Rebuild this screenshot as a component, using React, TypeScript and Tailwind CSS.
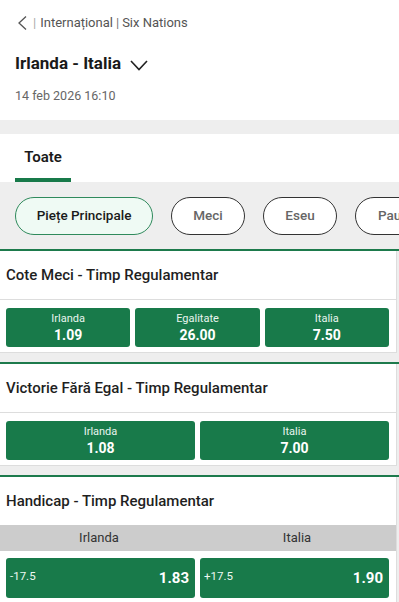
import React from "react";

const G = "bg-[#187a4a]";

function OddBtn({ label, value }: { label: string; value: string }) {
  return (
    <div className={`flex-1 h-[39px] rounded-[3px] ${G} flex flex-col items-center justify-center text-white leading-none`}>
      <span className="text-[11px] text-[#e8f5ee]">{label}</span>
      <span className="text-[14px] font-bold mt-[4px]">{value}</span>
    </div>
  );
}

function HcpBtn({ line, value }: { line: string; value: string }) {
  return (
    <div className={`flex-1 h-[40px] rounded-[3px] ${G} flex items-center justify-between pl-[4px] pr-[6px] text-white leading-none`}>
      <span className="text-[11.5px] text-[#eef8f2] -mt-[3px]">{line}</span>
      <span className="text-[15px] font-bold">{value}</span>
    </div>
  );
}

function Section({ title, children, last }: { title: string; children: React.ReactNode; last?: boolean }) {
  return (
    <div className={`border-t-2 border-[#1d7a4c] ${last ? "" : "mb-[9px]"}`}>
      <div className="bg-white w-[397px] border-r border-[#dddddd]">
        <div className="h-[48px] flex items-center pl-[6px] text-[15px] font-medium text-[#1f1f1f]">{title}</div>
        {children}
      </div>
    </div>
  );
}

export default function App() {
  return (
    <div className="w-[399px] h-[602px] overflow-hidden bg-[#eeeeee] font-['Roboto',sans-serif]">
      <div className="bg-white h-[120px] pl-[15px] pt-[14px]">
        <div className="flex items-center h-[18px] text-[13px] text-[#555555]">
          <svg width="12" height="16" viewBox="0 0 12 16" className="ml-[1px]">
            <path d="M10 1.5 L3 8 L10 14.5" fill="none" stroke="#555" strokeWidth="1.3" />
          </svg>
          <span className="ml-[5px] text-[#aaaaaa]">|</span>
          <span className="ml-[4px]">Internațional</span>
          <span className="ml-[3px] text-[#777]">|</span>
          <span className="ml-[3px]">Six Nations</span>
        </div>
        <div className="flex items-center mt-[21px] h-[22px]">
          <span className="text-[17px] font-bold text-[#1a1a1a]">Irlanda - Italia</span>
          <svg width="18" height="11" viewBox="0 0 18 11" className="ml-[9px] mt-[3px]">
            <path d="M1 1 L9 9.5 L17 1" fill="none" stroke="#222" strokeWidth="1.6" />
          </svg>
        </div>
        <div className="mt-[12px] text-[12.5px] text-[#666666]">14 feb 2026 16:10</div>
      </div>
      <div className="h-[14px]" />
      <div className="bg-white h-[48px] pl-[15px] flex items-end">
        <div className="w-[56px] flex flex-col items-center">
          <span className="text-[15px] font-semibold text-[#1a1a1a] leading-none">Toate</span>
          <div className={`w-full h-[4px] ${G} mt-[13px]`} />
        </div>
      </div>
      <div className="h-[67px] flex items-center gap-[18px] pl-[15px] overflow-hidden whitespace-nowrap">
        <div className="h-[38px] w-[138px] shrink-0 rounded-full border border-[#2f8a5c] bg-[#effaf4] flex items-center justify-center text-[13.5px] font-medium text-[#1a1a1a]">Piețe Principale</div>
        <div className="h-[38px] w-[74px] shrink-0 rounded-full border border-[#333] bg-white flex items-center justify-center text-[13.5px] font-medium text-[#666]">Meci</div>
        <div className="h-[38px] w-[74px] shrink-0 rounded-full border border-[#333] bg-white flex items-center justify-center text-[13.5px] font-medium text-[#666]">Eseu</div>
        <div className="h-[38px] w-[90px] shrink-0 rounded-full border border-[#333] bg-white flex items-center pl-[22px] text-[13.5px] font-medium text-[#666]">Pauză</div>
      </div>
      <Section title="Cote Meci - Timp Regulamentar">
        <div className="border-t border-[#dddddd] flex gap-[5px] pl-[6px] pr-[7px] pt-[8px] pb-[5px] border-b">
          <OddBtn label="Irlanda" value="1.09" />
          <OddBtn label="Egalitate" value="26.00" />
          <OddBtn label="Italia" value="7.50" />
        </div>
      </Section>
      <Section title="Victorie Fără Egal - Timp Regulamentar">
        <div className="border-t border-[#dddddd] flex gap-[5px] pl-[6px] pr-[7px] pt-[8px] pb-[5px] border-b">
          <OddBtn label="Irlanda" value="1.08" />
          <OddBtn label="Italia" value="7.00" />
        </div>
      </Section>
      <Section title="Handicap - Timp Regulamentar" last>
        <div className="h-[26px] bg-[#cccccc] flex text-[13px] text-[#333333]">
          <div className="flex-1 flex items-center justify-center">Irlanda</div>
          <div className="flex-1 flex items-center justify-center">Italia</div>
        </div>
        <div className="flex gap-[5px] pl-[6px] pr-[7px] pt-[7px] pb-[5px]">
          <HcpBtn line="-17.5" value="1.83" />
          <HcpBtn line="+17.5" value="1.90" />
        </div>
      </Section>
    </div>
  );
}
